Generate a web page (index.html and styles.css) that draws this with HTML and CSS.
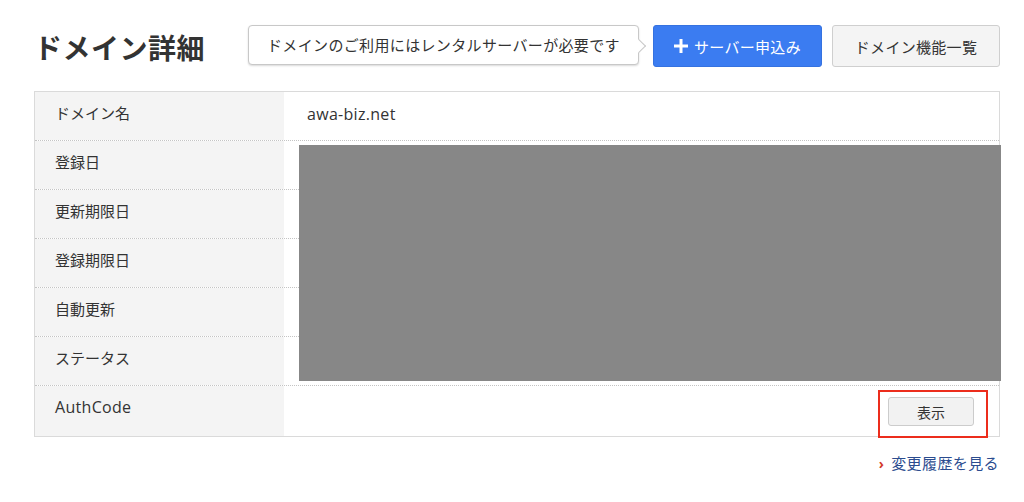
FILE: index.html
```html
<!DOCTYPE html>
<html lang="ja">
<head>
<meta charset="utf-8">
<link rel="stylesheet" href="styles.css">
</head>
<body>
<div class="page">
  <header class="head">
    <h1 class="title">ドメイン詳細</h1>
    <div class="actions">
      <div class="tip">ドメインのご利用にはレンタルサーバーが必要です</div>
      <button class="btn btn-blue"><svg class="plus" viewBox="0 0 14 14" width="14" height="14"><path d="M5.5 0h3v5.5H14v3H8.5V14h-3V8.5H0v-3h5.5z" fill="#fff"/></svg>サーバー申込み</button>
      <button class="btn btn-gray">ドメイン機能一覧</button>
    </div>
  </header>
  <div class="table">
    <div class="row"><div class="label">ドメイン名</div><div class="value"><span class="en">awa-biz.net</span></div></div>
    <div class="row"><div class="label">登録日</div><div class="value"></div></div>
    <div class="row"><div class="label">更新期限日</div><div class="value"></div></div>
    <div class="row"><div class="label">登録期限日</div><div class="value"></div></div>
    <div class="row"><div class="label">自動更新</div><div class="value"></div></div>
    <div class="row"><div class="label">ステータス</div><div class="value"></div></div>
    <div class="row last"><div class="label"><span class="en">AuthCode</span></div><div class="value action"><button class="btn-show">表示</button></div></div>
  </div>
  <div class="foot"><a class="history" href="#"><span class="chev">›</span>変更履歴を見る</a></div>
  <div class="redact"></div>
  <div class="mark"></div>
</div>
</body>
</html>
```
FILE: styles.css
```css
* { box-sizing: border-box; }
html, body { margin: 0; padding: 0; background: #fff; }
body { font-family: "Open Sans", "Noto Sans CJK JP", sans-serif; color: #333; }
.page { position: relative; width: 1024px; height: 502px; padding: 25px 24px 0 34px; }
.head { display: flex; justify-content: space-between; align-items: center; height: 42px; }
.title { margin: 0; font-size: 28px; font-weight: 700; color: #333; letter-spacing: 0.5px; line-height: 42px; position: relative; top: 2px; }
.actions { display: flex; align-items: flex-start; height: 42px; }
.tip { position: relative; width: 391px; height: 40px; border: 1px solid #c8c8c8; border-radius: 4px; background: #fff; box-shadow: 0 1px 2px rgba(0,0,0,0.15); font-size: 15px; letter-spacing: 0.35px; line-height: 38px; padding-left: 18px; color: #333; margin-right: 14px; }
.tip::after { content: ""; position: absolute; right: -6px; top: 15px; width: 9px; height: 9px; background: #fff; border-top: 1px solid #c8c8c8; border-right: 1px solid #c8c8c8; transform: rotate(45deg); }
.btn { height: 42px; border-radius: 3px; font-family: inherit; font-size: 15px; letter-spacing: 0.3px; display: flex; align-items: center; justify-content: center; padding: 0; }
.btn-blue { width: 169px; background: #3b7cf1; border: 1px solid #3572e0; color: #fff; margin-right: 10px; }
.plus { margin-right: 6px; }
.btn-gray { width: 168px; background: #f4f4f4; border: 1px solid #cfcfcf; color: #333; }
.table { margin-top: 24px; width: 966px; border: 1px solid #dadada; }
.row { display: flex; height: 49px; border-bottom: 1px dotted #c4c4c4; }
.row.last { border-bottom: none; height: 50px; }
.label { width: 249px; background: #f4f4f4; font-size: 15px; line-height: 22px; padding: 10px 0 0 20px; color: #333; }
.value { flex: 1; font-size: 15px; line-height: 22px; padding: 11px 0 0 23px; color: #333; }
.en { font-size: 16px; letter-spacing: 0.3px; }
.value.action { display: flex; justify-content: flex-end; padding: 11px 25px 0 0; }
.btn-show { width: 86px; height: 29px; background: #f2f2f2; border: 1px solid #cccccc; border-radius: 3px; font-family: inherit; font-size: 14px; color: #333; padding: 0; }
.foot { display: flex; justify-content: flex-end; margin-top: 15px; padding-right: 1px; }
.history { color: #2b4c8f; text-decoration: none; font-size: 15px; line-height: 22px; letter-spacing: 0.4px; }
.chev { color: #d23a2a; font-size: 14px; margin-right: 7px; font-weight: 700; }
.redact { position: absolute; left: 299px; top: 145px; width: 702px; height: 236px; background: #878787; }
.mark { position: absolute; left: 878px; top: 390px; width: 110px; height: 48px; border: 2px solid #ec2d1c; }
```
